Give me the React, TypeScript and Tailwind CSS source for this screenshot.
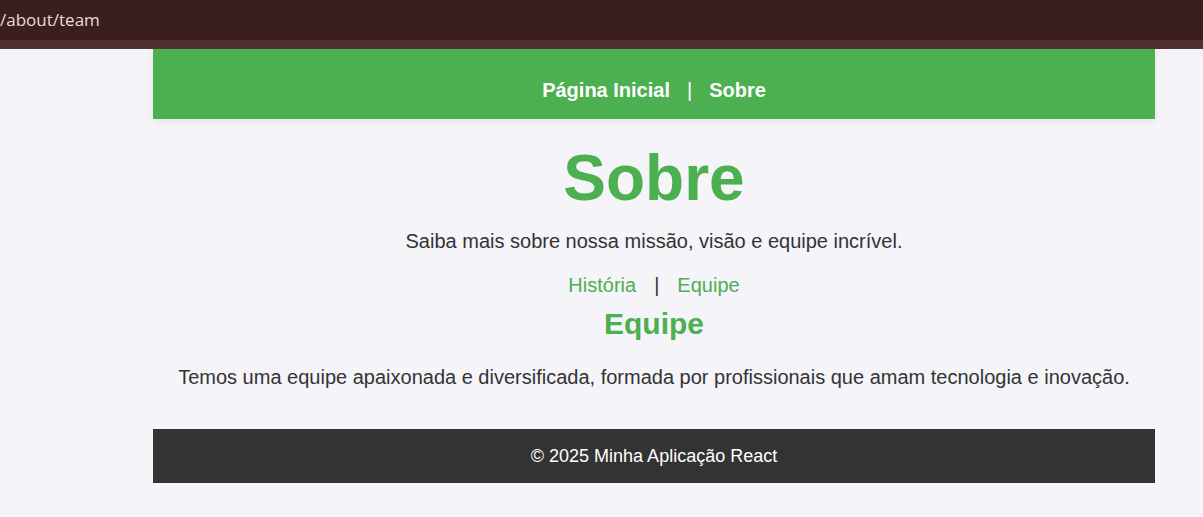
export default function App() {
  return (
    <div className="min-h-[517px] bg-[#f4f4f9] font-['Liberation_Sans',Arial,sans-serif] text-[#333]">
      {/* Address strip */}
      <div className="h-10 bg-[#3a1f1d] flex items-center font-['Open_Sans','Noto_Sans',sans-serif] text-[17px] text-[#e8dcd8]">
        /about/team
      </div>
      <div className="h-[9px] bg-[#4f3230]"></div>

      <div className="w-[1002px] ml-[153px]">
        {/* Header */}
        <header className="h-[70px] pt-[12px] bg-[#4caf50] flex items-center justify-center shadow-[0_2px_8px_rgba(0,0,0,0.08)]">
          <nav className="flex items-center gap-[17px] text-[20px] font-bold text-white">
            <a href="#">Página Inicial</a>
            <span className="font-normal">|</span>
            <a href="#">Sobre</a>
          </nav>
        </header>

        {/* Main */}
        <main className="text-center pt-[22px]">
          <h1 className="text-[64px] font-bold leading-[74px] text-[#4caf50]">Sobre</h1>
          <p className="mt-[14px] text-[20px] leading-[24px]">
            Saiba mais sobre nossa missão, visão e equipe incrível.
          </p>
          <div className="mt-[20px] flex justify-center items-center gap-[18px] text-[20px] leading-[24px]">
            <a href="#" className="text-[#4caf50]">História</a>
            <span className="text-[#333]">|</span>
            <a href="#" className="text-[#4caf50]">Equipe</a>
          </div>
          <h2 className="mt-[10px] text-[30px] font-bold leading-[34px] text-[#4caf50]">Equipe</h2>
          <p className="mt-[24px] text-[20px] leading-[24px]">
            Temos uma equipe apaixonada e diversificada, formada por profissionais que amam tecnologia e inovação.
          </p>
        </main>

        {/* Footer */}
        <footer className="mt-[40px] h-[54px] bg-[#333] flex items-center justify-center text-white text-[18px]">
          © 2025 Minha Aplicação React
        </footer>
      </div>
    </div>
  )
}
